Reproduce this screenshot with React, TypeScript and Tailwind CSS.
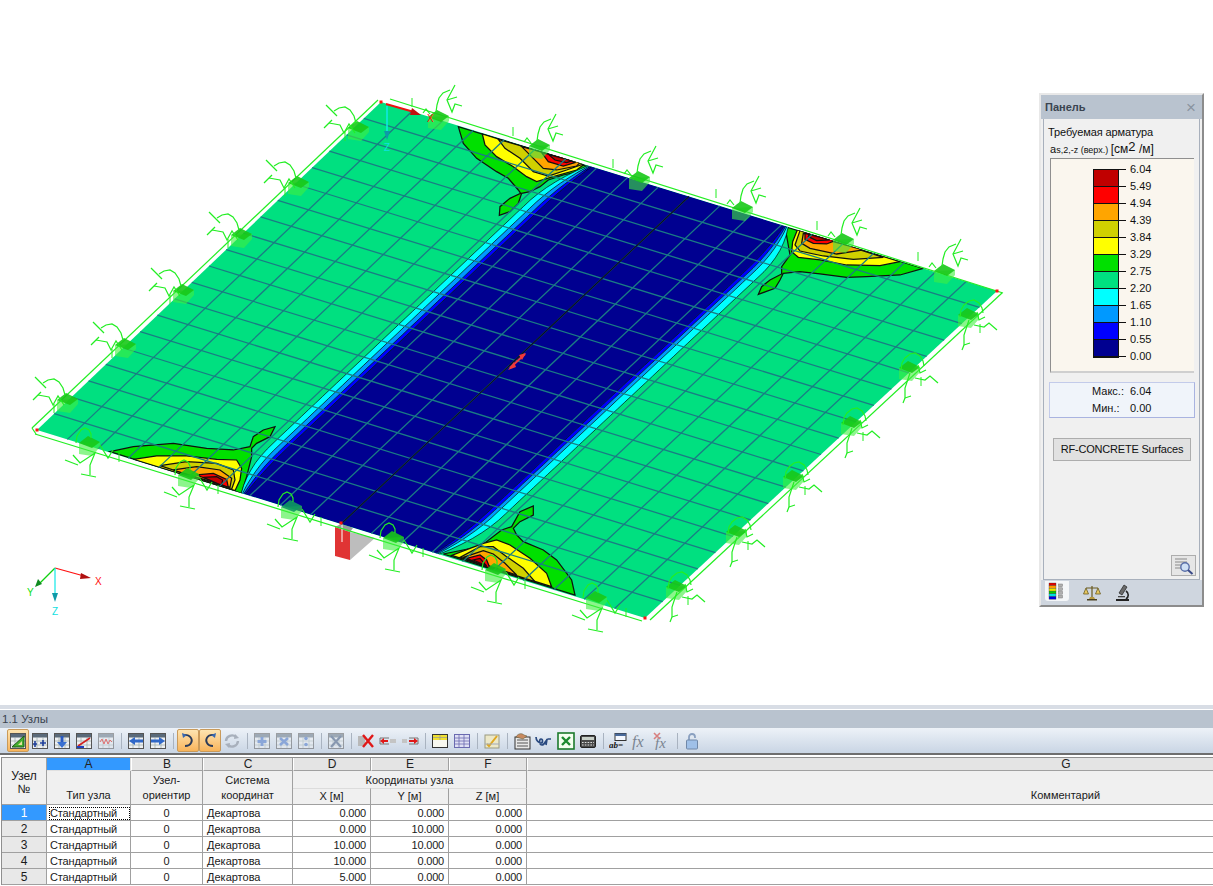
import React from 'react';

type Pt = [number, number];

// plate corners on screen
const T: Pt = [381, 102];
const R: Pt = [997, 291];
const L: Pt = [37, 430];
const B: Pt = [645, 618];

const P = (u: number, v: number): Pt => [
  T[0] + u * (R[0] - T[0]) + v * (L[0] - T[0]) + u * v * (B[0] + T[0] - L[0] - R[0]),
  T[1] + u * (R[1] - T[1]) + v * (L[1] - T[1]) + u * v * (B[1] + T[1] - L[1] - R[1]),
];
const pts = (a: Pt[]) => a.map((p) => `${p[0].toFixed(1)},${p[1].toFixed(1)}`).join(' ');

const steps = Array.from({ length: 51 }, (_, i) => i / 50);
const ramp = (v: number) => {
  const t = Math.min(1, Math.min(v, 1 - v) / 0.13);
  return t * (2 - t);
};
const edge = (mid: number, end: number) => steps.map((v) => P(end + (mid - end) * ramp(v), v));

const bounds = [
  edge(0.31, 0.336),
  edge(0.32, 0.338),
  edge(0.328, 0.34),
  edge(0.334, 0.342),
  edge(0.666, 0.655),
  edge(0.672, 0.657),
  edge(0.678, 0.659),
  edge(0.69, 0.661),
];
const bandColors = ['#00ffff', '#0099ff', '#0000ff', '#000090', '#0000ff', '#0099ff', '#00ffff'];

const legend = [
  ['6.04', '#c00000'],
  ['5.49', '#ff0000'],
  ['4.94', '#ffa500'],
  ['4.39', '#d0d000'],
  ['3.84', '#ffff00'],
  ['3.29', '#00e000'],
  ['2.75', '#00e080'],
  ['2.20', '#00ffff'],
  ['1.65', '#0099ff'],
  ['1.10', '#0000ff'],
  ['0.55', '#000090'],
];

// contour blobs in each corner, [colour, points]
const RED_D = '#c00000';
const cornerA: [string, string][] = [
  ['#00e000', '475,110 490,160 530,205 590,245 625,265 655,300 662,310 630,325 600,350 598,376 630,365 655,340 665,310 690,305 720,290 745,270 790,255 880,235'],
  ['#ffff00', '547,132 555,165 590,200 640,230 680,260 710,275 760,260 830,240 850,225'],
  ['#d0d000', '595,148 615,175 660,205 700,245 745,258 800,240 850,222'],
  ['#ffa500', '665,170 700,205 730,235 770,240 830,228 840,218'],
  ['#ff0000', '725,188 745,215 790,228 825,218 800,205'],
  [RED_D, '745,193 765,210 800,218 815,213 790,205'],
];
const cornerB: [string, string][] = [
  ['#00e000', '610,295 540,315 440,320 380,322 300,312 240,305 190,310 180,330 165,355 115,373 125,350 150,330 185,312 185,290 210,255 195,170'],
  ['#ffff00', '540,275 480,287 380,285 300,270 235,262 215,245 218,215 232,180'],
  ['#d0d000', '490,262 400,268 310,258 240,243 225,225 240,182'],
  ['#ffa500', '430,240 350,252 270,235 245,220 250,190'],
  ['#ff0000', '345,212 320,222 280,220 255,208 255,190'],
  [RED_D, '330,210 290,212 265,200 268,193'],
];
const cornerC: [string, string][] = [
  ['#00e000', '330,155 400,140 520,130 620,145 700,150 750,140 760,110 790,90 825,80 810,110 770,130 755,145 755,170 740,230 725,280'],
  ['#ffff00', '400,178 470,168 560,168 650,178 710,180 725,205 720,240 705,272'],
  ['#d0d000', '480,197 560,185 650,190 700,210 705,240 695,268'],
  ['#ffa500', '520,210 590,200 660,210 695,235 690,262'],
  ['#ff0000', '590,225 640,220 680,238 685,262'],
  [RED_D, '610,232 650,230 668,240 665,256'],
];
const cornerD: [string, string][] = [
  ['#00e000', '765,345 755,300 710,240 670,210 610,185 590,165 580,145 600,125 640,105 640,78 600,95 575,140 545,150 480,200 370,222'],
  ['#ffff00', '695,320 680,280 630,235 570,195 530,180 490,190 450,205 395,226'],
  ['#d0d000', '645,305 610,265 560,230 520,200 480,200 420,232'],
  ['#ffa500', '590,285 555,250 520,222 490,212 430,232'],
  ['#ff0000', '510,265 500,240 480,225 440,235'],
  [RED_D, '500,258 480,235 460,240'],
];

const Corner = ({ data, x, y }: { data: [string, string][]; x: number; y: number }) => (
  <g transform={`translate(${x} ${y}) scale(0.3333)`}>
    {data.map(([c, p], i) => (
      <polygon key={i} points={p} fill={c} stroke="#101010" strokeWidth={1.25} vectorEffect="non-scaling-stroke" />
    ))}
  </g>
);

const SP = '#22ee22';

const Block = ({ dark }: { dark?: boolean }) => (
  <g>
    <polygon points="-9,0 -9,11 4,13 12,4 12,-1" fill="#40ee40" fillOpacity={0.6} />
    <polygon points="-9,0 0,-7 12,-1 4,5" fill={dark ? '#0e9a60' : '#18c818'} fillOpacity={0.9} />
  </g>
);

type Kind = 'ul' | 'ur' | 'll' | 'lr';
const springs: Record<Kind, string[]> = {
  ul: [
    '-1,-5 -3,-12 -7,-18 -12,-21 -18,-20 -23,-17',
    '-31,-23 -20,-12',
    '-33,0 -25,-8',
    '-28,-5 -17,-3 -13,5 -8,-4 -2,5',
  ],
  ur: [
    '-1,-5 0,-12 2,-19 6,-24 13,-27',
    '18,-32 10,-17 15,-5 18,-13 25,-11',
    '10,-17 20,-20',
    '-14,-4 -11,-8 -7,-3',
  ],
  ll: [
    '-12,0 -11,-7 -7,-13 -3,-15 1,-13 3,-9 3,-5',
    '-23,17 -10,22',
    '-15,12 -8,20 7,10 2,22 2,32',
    '-7,31 8,34',
    '12,2 20,15 25,7',
  ],
  lr: [
    '-7,2 -6,-5 -3,-10 2,-14 7,-15 12,-12 15,-7 16,-2',
    '7,10 17,12 22,8 30,15',
    '2,5 -3,20 -3,30 3,28',
    '-3,30 -5,35',
    '10,-3 12,5 18,2',
  ],
};

const Support = ({ at, kind, dark }: { at: Pt; kind: Kind; dark?: boolean }) => (
  <g transform={`translate(${at[0]} ${at[1]})`}>
    <Block dark={dark} />
    {springs[kind].map((p, i) => (
      <polyline key={i} points={p} fill="none" stroke={SP} strokeWidth={1.2} />
    ))}
  </g>
);

const supports: { kind: Kind; list: Pt[]; tick: [number, number] }[] = [
  { kind: 'ul', list: [[357, 128], [297, 183], [240, 235], [182, 291], [124, 345], [66, 400]], tick: [-12, 8] },
  { kind: 'ur', list: [[437, 117], [538, 146], [638, 178], [741, 208], [842, 240], [943, 271]], tick: [-25, -15] },
  { kind: 'lr', list: [[967, 315], [908, 368], [850, 423], [792, 477], [735, 532], [675, 587]], tick: [13, 13] },
  { kind: 'll', list: [[88, 443], [187, 475], [290, 507], [392, 538], [494, 570], [595, 598]], tick: [31, 14] },
];

const Scene = () => (
  <svg viewBox="0 0 1039 705" className="w-[1039px] h-[705px] shrink-0">
    <defs>
      <clipPath id="plate">
        <polygon points={pts([T, R, B, L])} />
      </clipPath>
    </defs>

    {/* column under the plate */}
    <polygon points="335,527 350,532 375,538 350,560" fill="#bdbdbd" />
    <polygon points="335,527 350,532 350,560 335,556" fill="#e03434" />
    <polygon points="335,527 343,523 353,528 350,532" fill="#9a9a9a" />
    <line x1={342} y1={524} x2={342} y2={542} stroke="#ffffff" />

    <polygon points={pts([T, R, B, L])} fill="#00e080" />

    <g clipPath="url(#plate)">
      <Corner data={cornerA} x={300} y={90} />
      <Corner data={cornerB} x={720} y={170} />
      <Corner data={cornerC} x={0} y={400} />
      <Corner data={cornerD} x={320} y={480} />
      {bandColors.map((c, i) => (
        <polygon key={c + i} points={pts([...bounds[i], ...[...bounds[i + 1]].reverse()])} fill={c} />
      ))}
      {bounds.map((b, i) => (
        <polyline key={i} points={pts(b)} fill="none" stroke="#050505" strokeWidth={0.8} strokeOpacity={0.85} />
      ))}
    </g>

    {Array.from({ length: 19 }, (_, i) => (i + 1) / 20).map((t) => (
      <g key={t} stroke="#1a7c84" strokeWidth={1.3} fill="none">
        <polyline points={pts([P(t, 0), P(t, 1)])} />
        <polyline points={pts([P(0, t), P(1, t)])} />
      </g>
    ))}
    <polyline points={pts([P(0.5, 0), P(0.5, 1)])} fill="none" stroke="#0a0a20" strokeWidth={1.2} />

    {/* frame round the plate */}
    <g stroke={SP} strokeWidth={1.2} fill="none">
      <line x1={390} y1={99} x2={1003} y2={293} />
      <line x1={378} y1={100} x2={32} y2={428} />
      <line x1={35} y1={434} x2={642} y2={621} />
      <line x1={1002} y1={293} x2={650} y2={620} />
      <line x1={32} y1={428} x2={36} y2={434} />
    </g>

    {supports.map((s) =>
      s.list.map((at, i) => (
        <g key={s.kind + i}>
          <line
            x1={at[0] + s.tick[0]}
            y1={at[1] + s.tick[1] - 4}
            x2={at[0] + s.tick[0]}
            y2={at[1] + s.tick[1] + 5}
            stroke={SP}
          />
          <Support at={at} kind={s.kind} dark={s.kind === 'll' && i === 2} />
        </g>
      )),
    )}

    {[[37, 430], [381, 102], [997, 291], [645, 618], [341, 523]].map(([x, y]) => (
      <rect key={x} x={x - 1.5} y={y - 1.5} width={3} height={3} fill="#ff1010" />
    ))}

    {/* local axes */}
    <line x1={386} y1={104} x2={414} y2={112} stroke="#ee1010" strokeWidth={2} />
    <polygon points="412,108 421,115 410,115" fill="#c01010" />
    <line x1={387} y1={106} x2={387} y2={132} stroke="#10e8e8" strokeWidth={1.5} />
    <polygon points="384,131 390,131 387,140" fill="#0e9aa8" />
    <text x={427} y={122} fontSize={10} fill="#ff1010" fontFamily="Liberation Sans">X</text>
    <text x={384} y={151} fontSize={10} fill="#10e0e0" fontFamily="Liberation Sans">Z</text>

    {/* marker in the middle of the plate */}
    <polyline points="510,368 525,354" stroke="#f03a3a" strokeWidth={2} fill="none" />
    <polygon points="508,370 514,362 516,367" fill="#f03a3a" />
    <polygon points="526,353 519,355 522,360" fill="#f03a3a" />

    {/* global axes */}
    <line x1={55} y1={568} x2={84} y2={576} stroke="#ff1010" strokeWidth={1.2} />
    <polygon points="81,573 91,578 80,579" fill="#b01010" />
    <line x1={55} y1={568} x2={39} y2={584} stroke="#10d010" strokeWidth={1.2} />
    <polygon points="35,587 38,579 42,584" fill="#108a20" />
    <line x1={55} y1={568} x2={55} y2={594} stroke="#10e8e8" strokeWidth={1.2} />
    <polygon points="52,593 58,593 55,602" fill="#0e9aa8" />
    <text x={95} y={585} fontSize={10} fill="#ff1010" fontFamily="Liberation Sans">X</text>
    <text x={27} y={596} fontSize={10} fill="#10e010" fontFamily="Liberation Sans">Y</text>
    <text x={52} y={615} fontSize={10} fill="#10e0e0" fontFamily="Liberation Sans">Z</text>
  </svg>
);

const LegendTabIcon = () => (
  <svg width={18} height={18} viewBox="0 0 18 18">
    {['#e00000', '#ff9900', '#e8e800', '#00d000', '#00e0e0', '#0000e0'].map((c, i) => (
      <rect key={c} x={1} y={1 + i * 2.7} width={7} height={2.7} fill={c} stroke="#333" strokeWidth={0.3} />
    ))}
    {[0, 1, 2, 3].map((i) => (
      <rect key={i} x={10.5} y={2 + i * 3.8} width={4} height={2.6} fill="#b0b0b0" stroke="#777" strokeWidth={0.5} />
    ))}
  </svg>
);

const BalanceIcon = () => (
  <svg width={18} height={18} viewBox="0 0 18 18">
    <path d="M9 2v12M3 4h12" stroke="#6a5a20" strokeWidth={1.2} fill="none" />
    <path d="M3 4l-2.5 6h5zM15 4l-2.5 6h5z" fill="#e8c860" stroke="#6a5a20" strokeWidth={0.8} />
    <path d="M4 15h10v1.5H4z" fill="#4a4020" />
    <path d="M7 13h4l1 2H6z" fill="#b89a40" />
  </svg>
);

const MicroscopeIcon = () => (
  <svg width={18} height={18} viewBox="0 0 18 18">
    <path d="M10 1l3 2-5 8-3-2z" fill="#6a6a6a" stroke="#222" strokeWidth={0.7} />
    <path d="M12 7c3 2 3 6 0 8" fill="none" stroke="#222" strokeWidth={1.6} />
    <path d="M4 12h7v1.3H4z" fill="#444" />
    <path d="M2 15h13v2H2z" fill="#222" />
  </svg>
);

const LensIcon = () => (
  <svg width={20} height={18} viewBox="0 0 20 18">
    {[2, 5, 8, 11].map((y) => (
      <line key={y} x1={1} x2={y > 6 ? 7 : 13} y1={y} y2={y} stroke="#8a8a8a" strokeWidth={1} />
    ))}
    <circle cx={11} cy={10} r={4.2} fill="#cfe0f5" stroke="#5a6fa8" strokeWidth={1.4} />
    <line x1={14} y1={13} x2={18.5} y2={17} stroke="#3a4a88" strokeWidth={2} />
  </svg>
);

const Panel = () => (
  <aside className="mt-[93px] w-[165px] h-[514px] bg-[#f0f0f0] border-2 border-[#e8e8e8] border-r-[#8c8c8c] border-b-[#8c8c8c] flex flex-col text-[11px] text-[#111]">
    <header className="h-[24px] shrink-0 bg-[#b9c3cf] flex items-center justify-between pl-1 pr-[6px] pt-[1px]">
      <span className="text-[11px] font-bold text-[#3a4450]">Панель</span>
      <span className="text-[17px] leading-none text-[#8a949f]">×</span>
    </header>
    <div className="flex-1 flex flex-col px-[4px] mx-[2px] border-l border-r border-[#a8b0bc] border-b relative">
      <div className="mt-[6px] leading-[15px] tracking-[-0.1px]">Требуемая арматура</div>
      <div className="h-[17px] leading-[17px] whitespace-nowrap pl-[2px]">
        <span>a</span>
        <span className="text-[9px]">s,2,-z (верх.) </span>
        <span className="text-[12px]">[см</span>
        <span className="text-[13px] relative top-[-2px]">2</span>
        <span className="text-[12px]"> /м]</span>
      </div>
      <div className="h-[215px] mt-[1px] ml-[2px] mr-[1px] shrink-0 bg-[#faf6ee] border-t border-[#8f8f8f] border-b-2 border-l border-b-[#cfcfcf] border-l-[#8f8f8f] pl-[42px] pt-[10px]">
        <div className="relative w-[26px] border border-[#111]">
          {legend.map(([v, c]) => (
            <div key={v} className="h-[17px] border-b border-[#111] last:border-b-0" style={{ background: c }} />
          ))}
          {legend.map(([v], i) => (
            <div key={v} className="absolute left-[25px] flex items-center" style={{ top: i * 17 - 9 }}>
              <span className="w-[7px] h-px bg-[#111]" />
              <span className="ml-[4px] leading-[16px]">{v}</span>
            </div>
          ))}
          <div className="absolute left-[25px] flex items-center top-[178px]">
            <span className="w-[7px] h-px bg-[#111]" />
            <span className="ml-[4px] leading-[16px]">0.00</span>
          </div>
        </div>
      </div>
      <div className="mt-[9px] ml-[1px] h-[36px] shrink-0 bg-[#f0f4fa] border border-[#c3cbea] border-b-[#a9b3e0] border-r-[#a9b3e0] flex flex-col justify-center leading-[17px] pl-[42px]">
        <div className="flex whitespace-nowrap"><span className="w-[38px]">Макс.:</span><span>6.04</span></div>
        <div className="flex whitespace-nowrap"><span className="w-[38px]">Мин.:</span><span>0.00</span></div>
      </div>
      <button className="mt-[20px] ml-[5px] mr-[4px] h-[23px] shrink-0 bg-[#e1e1e1] border border-[#adadad] text-center text-[11px] tracking-[-0.2px] whitespace-nowrap">
        RF-CONCRETE Surfaces
      </button>
      <button className="absolute right-[3px] bottom-[3px] w-[25px] h-[21px] bg-[#e6e6e6] border border-[#adadad] flex items-center justify-center">
        <LensIcon />
      </button>
    </div>
    <footer className="h-[25px] shrink-0 bg-[#cfd6df] flex items-center pl-[4px]">
      <div className="w-[24px] h-[20px] -mt-[3px] bg-[#f4f6f8] rounded-b-[3px] flex items-center justify-center">
        <LegendTabIcon />
      </div>
      <div className="ml-[14px]"><BalanceIcon /></div>
      <div className="ml-[13px]"><MicroscopeIcon /></div>
    </footer>
  </aside>
);

const G = ({ children, on }: { children: React.ReactNode; on?: boolean }) => (
  <div className={`w-[22px] h-[23px] flex items-center justify-center shrink-0 ${on ? 'bg-gradient-to-b from-[#fde4b0] to-[#f8b45a] border border-[#c99a5a] rounded-[2px]' : ''}`}>
    <svg width={18} height={18} viewBox="0 0 18 18">{children}</svg>
  </div>
);
const Sep = () => <div className="w-px h-[16px] bg-[#a9b3c0] mx-[3.5px] shrink-0" />;

const Sheet = ({ faint }: { faint?: boolean }) => (
  <g opacity={faint ? 0.5 : 1}>
    <rect x={1.5} y={1.5} width={15} height={15} fill="#eef0f2" stroke="#555" />
    <rect x={2} y={2} width={14} height={3.5} fill="#5a6a7a" />
    <path d="M2 9h14M2 13h14M6 5v11M12 5v11" stroke="#9aa" strokeWidth={0.7} />
  </g>
);

const Toolbar = () => (
  <div className="h-[25px] bg-gradient-to-b from-[#edf2f8] to-[#c9d5e4] flex items-center pl-[7px]">
    <G on>
      <Sheet />
      <polygon points="3,15 15,4 15,15" fill="#44b030" stroke="#1c5a14" />
      <polygon points="9,13 13,9 13,13" fill="#e8e0a0" />
    </G>
    <G>
      <Sheet />
      <path d="M4 9v6M2 12h4M9 11h6M12 8v6" stroke="#1f3f9a" strokeWidth={1.6} />
    </G>
    <G>
      <Sheet />
      <path d="M9 4v7" stroke="#2a5ac0" strokeWidth={3} />
      <polygon points="4,10 14,10 9,16" fill="#3a70d0" />
    </G>
    <G>
      <Sheet />
      <path d="M3 14L15 6" stroke="#d02020" strokeWidth={1.6} />
      <path d="M2 15h7" stroke="#2040c0" strokeWidth={2} />
    </G>
    <G>
      <Sheet faint />
      <path d="M3 10l2-3 2 5 2-5 2 5 2-4 2 2" fill="none" stroke="#e07070" />
    </G>
    <Sep />
    <G>
      <Sheet />
      <polygon points="2,9 8,5 8,13" fill="#3068c8" />
      <rect x={8} y={7.5} width={8} height={3} fill="#3068c8" />
    </G>
    <G>
      <Sheet />
      <polygon points="16,9 10,5 10,13" fill="#3068c8" />
      <rect x={2} y={7.5} width={8} height={3} fill="#3068c8" />
    </G>
    <Sep />
    <G on>
      <path d="M4 3c8-1 10 5 8 8-1 2-4 3-6 3" fill="none" stroke="#2a3a58" strokeWidth={1.8} />
      <polygon points="3,1 8,3 4,6" fill="#3868b0" />
    </G>
    <G on>
      <path d="M13 3C6 2 4 8 6 11c1 2 4 3 6 3" fill="none" stroke="#2a3a58" strokeWidth={1.8} />
      <polygon points="15,1 10,3 14,6" fill="#3868b0" />
    </G>
    <G>
      <path d="M3 9a6 6 0 0 1 10-4M15 9a6 6 0 0 1-10 4" fill="none" stroke="#a8b0bc" strokeWidth={2.4} />
      <polygon points="12,2 16,6 11,7" fill="#a8b0bc" />
      <polygon points="6,16 2,12 7,11" fill="#a8b0bc" />
    </G>
    <Sep />
    <G>
      <Sheet faint />
      <path d="M9 5v9M4.5 9.5h9" stroke="#8aa6d8" strokeWidth={3} />
    </G>
    <G>
      <Sheet faint />
      <path d="M5 6l8 7M13 6l-8 7" stroke="#8aa6d8" strokeWidth={2.6} />
    </G>
    <G>
      <Sheet faint />
      <circle cx={9} cy={6.5} r={1.8} fill="#8aa6d8" />
      <circle cx={9} cy={12.5} r={1.8} fill="#8aa6d8" />
    </G>
    <Sep />
    <G>
      <Sheet faint />
      <path d="M4 4l10 11M14 4L4 15" stroke="#8898b0" strokeWidth={2.2} />
    </G>
    <Sep />
    <G>
      <rect x={1} y={4} width={7} height={10} fill="#b8b8b8" />
      <path d="M6 3l10 12M16 3L6 15" stroke="#e01818" strokeWidth={2.4} />
    </G>
    <G>
      <path d="M1 6h9M1 12h9M1 6v6" stroke="#777" fill="none" />
      <rect x={11} y={7} width={6} height={4} fill="#c4c4c4" />
      <path d="M3 9h6" stroke="#e01818" strokeWidth={2} />
      <polygon points="1,9 5,6 5,12" fill="#e01818" />
    </G>
    <G>
      <path d="M8 6h9M8 12h9M17 6v6" stroke="#777" fill="none" />
      <rect x={1} y={7} width={5} height={4} fill="#c4c4c4" />
      <path d="M8 9h6" stroke="#e01818" strokeWidth={2} />
      <polygon points="17,9 13,6 13,12" fill="#e01818" />
    </G>
    <Sep />
    <G>
      <rect x={1.5} y={2.5} width={15} height={13} fill="#f8f8f0" stroke="#333" />
      <rect x={2} y={3} width={14} height={5} fill="#f0e030" />
      <path d="M2 5.5h14M9 3v5" stroke="#999" strokeWidth={0.7} />
    </G>
    <G>
      <rect x={1.5} y={2.5} width={15} height={13} fill="#dfe0f4" stroke="#6a6ab0" />
      <path d="M2 6h14M2 9h14M2 12h14M6 3v12M11 3v12" stroke="#6a6ab0" strokeWidth={0.8} />
    </G>
    <Sep />
    <G>
      <rect x={2} y={3} width={14} height={13} fill="#ece8c8" stroke="#9a9a80" />
      <path d="M4 12l2 2 8-10" stroke="#e0a820" strokeWidth={2} fill="none" />
      <path d="M2 12h14" stroke="#a0a8b8" />
    </G>
    <Sep />
    <G>
      <rect x={2} y={5} width={15} height={12} fill="#e8e8e8" stroke="#333" />
      <path d="M4 8h11M4 11h11M4 14h11" stroke="#555" />
      <path d="M3 5c2-4 6-4 8-2l3 1-4 3z" fill="#c88a60" stroke="#553" strokeWidth={0.5} />
    </G>
    <G>
      <path d="M1 5c0 4 3 6 5 6s2-4 0-4-2 6 1 6 4-6 6-6h3M12 7l-1 6" fill="none" stroke="#2a4a80" strokeWidth={1.7} />
    </G>
    <G>
      <rect x={1} y={1} width={16} height={16} fill="#f4fff0" stroke="#1c7a2c" strokeWidth={1.6} />
      <path d="M5 5l8 8M13 5l-8 8" stroke="#1c8a30" strokeWidth={2.4} />
    </G>
    <G>
      <rect x={1.5} y={3.5} width={15} height={12} rx={1.5} fill="#4a4a4a" stroke="#222" />
      <rect x={3} y={5} width={12} height={3} fill="#c8d0c8" />
      <path d="M3 10.5h12M3 13h12" stroke="#ddd" strokeWidth={1.2} strokeDasharray="1.6 1.2" />
    </G>
    <Sep />
    <G>
      <rect x={6} y={1.5} width={11} height={7} fill="#f4f8ff" stroke="#333" />
      <rect x={6} y={1.5} width={11} height={2.5} fill="#4a6a9a" />
      <text x={0} y={15.5} fontSize={9} fontWeight="bold" fontStyle="italic" fontFamily="Liberation Serif" fill="#111">ab=</text>
    </G>
    <G>
      <text x={1} y={15} fontSize={16} fontStyle="italic" fontFamily="Liberation Serif" fill="#7a8490">fx</text>
    </G>
    <G>
      <text x={2} y={16} fontSize={15} fontStyle="italic" fontFamily="Liberation Serif" fill="#7a8490">fx</text>
      <path d="M1 1l6 6M7 1L1 7" stroke="#d88080" strokeWidth={1.6} />
    </G>
    <Sep />
    <G>
      <path d="M6 8V5a3 3 0 0 1 6 0v1" fill="none" stroke="#8aa0c0" strokeWidth={1.8} />
      <rect x={3.5} y={8} width={11} height={9} rx={1} fill="#9fc0e8" stroke="#7088a8" />
    </G>
  </div>
);

const rows = [
  ['1', '0.000', '0.000', '0.000'],
  ['2', '0.000', '10.000', '0.000'],
  ['3', '10.000', '10.000', '0.000'],
  ['4', '10.000', '0.000', '0.000'],
  ['5', '5.000', '0.000', '0.000'],
];
const letters = ['A', 'B', 'C', 'D', 'E', 'F', 'G'];

const line = 'border-r border-b border-[#a0a0a0]';
const head = `${line} bg-[#f0f0f0] flex items-center justify-center`;
const num = `${line} flex items-center justify-end pr-[4px] pt-[1px] bg-white tracking-[-0.2px]`;

const NodeTable = () => (
  <div className="ml-px mt-[2px] w-[1604px] border-t border-l border-[#8f8f8f] grid grid-cols-[45px_84px_72px_90px_78px_78px_78px_1fr] grid-rows-[13px_17px_17px_16px_16px_16px_16px_16px] text-[11px] text-[#1a1a1a] leading-none">
    <div className={`${head} row-span-3 flex-col leading-[13px] pt-[3px] text-[12px]`}>
      <span>Узел</span>
      <span>№</span>
    </div>
    {letters.map((l, i) => (
      <div key={l} className={`${line} flex items-center justify-center text-[12px] ${i === 0 ? 'bg-[#3399ff] border-[#e0e0e0]' : 'bg-[#e4e4e4] border-l border-l-white'} text-[#222]`}>
        {l}
      </div>
    ))}
    <div className={`${head} border-b-0`} />
    <div className={`${head} border-b-0 pt-[1px]`}>Узел-</div>
    <div className={`${head} border-b-0 pt-[1px]`}>Система</div>
    <div className={`${head} border-b-0 col-span-3 pt-[1px]`}>Координаты узла</div>
    <div className={`${head} border-b-0`} />
    <div className={`${head} pb-[1px]`}>Тип узла</div>
    <div className={`${head} pb-[1px]`}>ориентир</div>
    <div className={`${head} pb-[1px]`}>координат</div>
    <div className={`${head} pb-[1px] border-t border-t-[#dcdcdc]`}>X [м]</div>
    <div className={`${head} pb-[1px] border-t border-t-[#dcdcdc]`}>Y [м]</div>
    <div className={`${head} pb-[1px] border-t border-t-[#dcdcdc]`}>Z [м]</div>
    <div className={`${head} pb-[1px]`}>Комментарий</div>
    {rows.map(([n, x, y, z], i) => (
      <React.Fragment key={n}>
        <div className={`${line} flex items-center justify-center text-[12px] ${i === 0 ? 'bg-[#3399ff] text-white' : 'bg-[#e8e8e8]'}`}>{n}</div>
        <div className={`${line} flex items-center pl-[2px] bg-white`}>
          <span className={`px-px py-[1px] mt-[1px] tracking-[-0.15px] ${i === 0 ? 'outline outline-1 outline-dotted outline-black -outline-offset-1 w-full' : ''}`}>Стандартный</span>
        </div>
        <div className={`${line} flex items-center justify-center pt-[1px] bg-white`}>0</div>
        <div className={`${line} flex items-center pl-[4px] pt-[1px] bg-white`}>
          <span><span className="underline">Д</span>екартова</span>
        </div>
        <div className={num}>{x}</div>
        <div className={num}>{y}</div>
        <div className={num}>{z}</div>
        <div className={`${line} bg-white`} />
      </React.Fragment>
    ))}
  </div>
);

export default function App() {
  return (
    <div className="w-[1213px] h-[886px] overflow-hidden bg-white font-['Liberation_Sans',Arial,sans-serif]">
      <div className="flex h-[705px]">
        <Scene />
        <Panel />
      </div>
      <div className="h-[4px] bg-[#d8dde5]" />
      <div className="h-px bg-white" />
      <div className="h-[18px] bg-[#b9c3cf] flex items-center pl-[2px] pt-[1px] text-[11.5px] text-[#3a4450]">1.1 Узлы</div>
      <Toolbar />
      <div className="h-[2px] bg-[#6e6e6e]" />
      <NodeTable />
    </div>
  );
}
